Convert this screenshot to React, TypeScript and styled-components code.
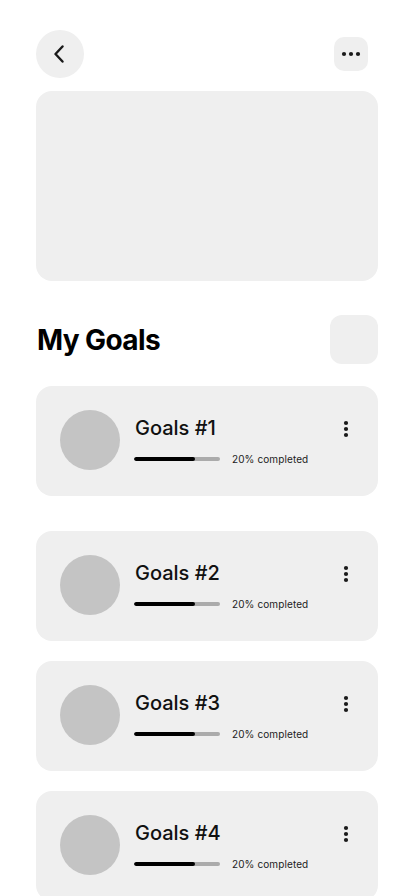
import React from "react";
import styled, { createGlobalStyle } from "styled-components";

const GlobalStyle = createGlobalStyle`
  html, body { margin: 0; padding: 0; background: #ffffff; }
  body { font-family: "Inter", "Noto Sans", sans-serif; color: #000; }
  * { box-sizing: border-box; }
`;

const Page = styled.div`
  width: 414px;
  min-height: 896px;
  padding: 30px 36px 0 36px;
  display: flex;
  flex-direction: column;
`;

const TopBar = styled.div`
  display: flex;
  align-items: center;
  justify-content: space-between;
  height: 48px;
`;

const BackButton = styled.button`
  width: 48px;
  height: 48px;
  border-radius: 50%;
  border: none;
  background: #efefef;
  display: flex;
  align-items: center;
  justify-content: center;
  padding: 0 2px 0 0;
`;

const MoreButton = styled.button`
  width: 34px;
  height: 34px;
  margin-right: 10px;
  border-radius: 10px;
  border: none;
  background: #efefef;
  display: flex;
  align-items: center;
  justify-content: center;
  padding: 0;
`;

const Banner = styled.div`
  margin-top: 13px;
  height: 190px;
  border-radius: 16px;
  background: #efefef;
`;

const SectionHeader = styled.div`
  margin-top: 34px;
  display: flex;
  align-items: center;
  justify-content: space-between;
  height: 49px;
`;

const Heading = styled.h1`
  margin: 0 0 0 1px;
  font-size: 28px;
  font-weight: 700;
  letter-spacing: -0.6px;
  line-height: 34px;
`;

const SquareButton = styled.div`
  width: 48px;
  height: 49px;
  border-radius: 12px;
  background: #efefef;
`;

const CardList = styled.div`
  display: flex;
  flex-direction: column;
  margin-top: 22px;
`;

const Card = styled.div<{ $gap: number }>`
  margin-top: ${(p) => p.$gap}px;
  height: 110px;
  border-radius: 16px;
  background: #efefef;
  display: flex;
  align-items: flex-start;
  padding: 24px 22px 24px 24px;
`;

const Avatar = styled.div`
  width: 60px;
  height: 60px;
  border-radius: 50%;
  background: #c4c4c4;
  flex-shrink: 0;
`;

const Info = styled.div`
  flex: 1;
  margin-left: 15px;
  padding-top: 6px;
  display: flex;
  flex-direction: column;
`;

const Title = styled.div`
  font-size: 20px;
  font-weight: 500;
  line-height: 24px;
  color: #111;
`;

const ProgressRow = styled.div`
  margin-top: 13px;
  height: 12px;
  display: flex;
  align-items: center;
`;

const Track = styled.div`
  width: 86px;
  height: 4px;
  margin-left: -1px;
  border-radius: 2px;
  background: #ababab;
  overflow: hidden;
`;

const Fill = styled.div`
  height: 100%;
  border-radius: 2px;
  background: #000;
`;

const ProgressLabel = styled.span`
  margin-left: 12px;
  font-size: 10px;
  line-height: 12px;
  letter-spacing: 0.1px;
  color: #222;
`;

const Kebab = styled.button`
  width: 20px;
  height: 24px;
  margin-top: 7px;
  border: none;
  background: transparent;
  padding: 0;
  display: flex;
  align-items: center;
  justify-content: center;
`;

const goals = [
  { title: "Goals #1", gap: 0 },
  { title: "Goals #2", gap: 35 },
  { title: "Goals #3", gap: 20 },
  { title: "Goals #4", gap: 20 },
];

export default function App() {
  return (
    <>
      <GlobalStyle />
      <Page>
        <TopBar>
          <BackButton aria-label="Back">
            <svg width="12" height="18" viewBox="0 0 12 18" fill="none">
              <path d="M9.5 1.5 L2.5 9 L9.5 16.5" stroke="#1a1a1a" strokeWidth="2.4" strokeLinecap="round" strokeLinejoin="round" />
            </svg>
          </BackButton>
          <MoreButton aria-label="More">
            <svg width="20" height="6" viewBox="0 0 20 6">
              <circle cx="3" cy="3" r="2.1" fill="#1a1a1a" />
              <circle cx="10" cy="3" r="2.1" fill="#1a1a1a" />
              <circle cx="17" cy="3" r="2.1" fill="#1a1a1a" />
            </svg>
          </MoreButton>
        </TopBar>
        <Banner />
        <SectionHeader>
          <Heading>My Goals</Heading>
          <SquareButton />
        </SectionHeader>
        <CardList>
          {goals.map((g) => (
            <Card key={g.title} $gap={g.gap}>
              <Avatar />
              <Info>
                <Title>{g.title}</Title>
                <ProgressRow>
                  <Track>
                    <Fill style={{ width: "71%" }} />
                  </Track>
                  <ProgressLabel>20% completed</ProgressLabel>
                </ProgressRow>
              </Info>
              <Kebab aria-label="Options">
                <svg width="6" height="18" viewBox="0 0 6 18">
                  <circle cx="3" cy="3" r="2.1" fill="#1a1a1a" />
                  <circle cx="3" cy="9" r="2.1" fill="#1a1a1a" />
                  <circle cx="3" cy="15" r="2.1" fill="#1a1a1a" />
                </svg>
              </Kebab>
            </Card>
          ))}
        </CardList>
      </Page>
    </>
  );
}
